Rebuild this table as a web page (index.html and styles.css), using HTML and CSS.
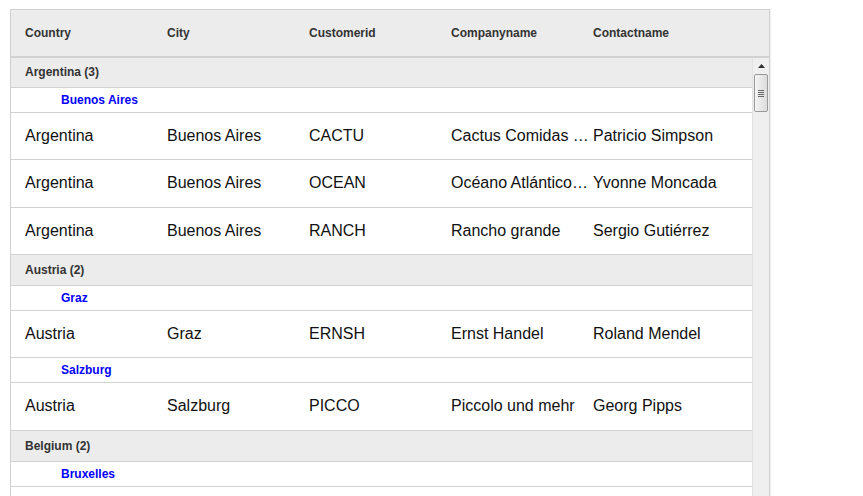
FILE: index.html
```html
<!DOCTYPE html>
<html>
<head>
<meta charset="utf-8">
<link rel="stylesheet" href="styles.css">
</head>
<body>
<div class="grid">
  <div class="header">
    <div class="cell">Country</div>
    <div class="cell">City</div>
    <div class="cell">Customerid</div>
    <div class="cell">Companyname</div>
    <div class="cell">Contactname</div>
  </div>
  <div class="body">
    <div class="rows">
      <div class="group first">Argentina (3)</div>
      <div class="sub">Buenos Aires</div>
      <div class="row"><div class="cell">Argentina</div><div class="cell">Buenos Aires</div><div class="cell">CACTU</div><div class="cell">Cactus Comidas para llevar</div><div class="cell">Patricio Simpson</div></div>
      <div class="row"><div class="cell">Argentina</div><div class="cell">Buenos Aires</div><div class="cell">OCEAN</div><div class="cell">Océano Atlántico Ltda.</div><div class="cell">Yvonne Moncada</div></div>
      <div class="row"><div class="cell">Argentina</div><div class="cell">Buenos Aires</div><div class="cell">RANCH</div><div class="cell">Rancho grande</div><div class="cell">Sergio Gutiérrez</div></div>
      <div class="group">Austria (2)</div>
      <div class="sub">Graz</div>
      <div class="row"><div class="cell">Austria</div><div class="cell">Graz</div><div class="cell">ERNSH</div><div class="cell">Ernst Handel</div><div class="cell">Roland Mendel</div></div>
      <div class="sub">Salzburg</div>
      <div class="row"><div class="cell">Austria</div><div class="cell">Salzburg</div><div class="cell">PICCO</div><div class="cell">Piccolo und mehr</div><div class="cell">Georg Pipps</div></div>
      <div class="group">Belgium (2)</div>
      <div class="sub">Bruxelles</div>
      <div class="row"><div class="cell">Belgium</div><div class="cell">Bruxelles</div><div class="cell">SUPRD</div><div class="cell">Suprêmes délices</div><div class="cell">Pascale Cartrain</div></div>
    </div>
    <div class="scrollbar">
      <div class="arrow"><svg width="7" height="4" viewBox="0 0 7 4"><path d="M0 4 L3.5 0 L7 4 Z" fill="#333"/></svg></div>
      <div class="thumb"><span></span><span></span><span></span><span></span></div>
    </div>
  </div>
</div>
</body>
</html>
```

FILE: styles.css
```css
html, body {
  margin: 0;
  padding: 0;
  background: #fff;
  overflow: hidden;
}
body {
  padding: 9px 0 0 10px;
  font-family: "Liberation Sans", Arial, sans-serif;
  color: #000;
}
.grid {
  width: 758px;
  border: 1px solid #d0d0d0;
  border-bottom: none;
  height: 600px;
  overflow: hidden;
  box-shadow: 1px 0 1px rgba(0,0,0,0.06);
}
.header {
  display: flex;
  align-items: center;
  height: 46px;
  padding-left: 14px;
  background: #ececec;
  border-bottom: 2px solid #d2d2d2;
  font-size: 12px;
  font-weight: bold;
  color: #333;
}
.cell {
  width: 142px;
  flex: none;
  box-sizing: border-box;
  padding-right: 3px;
  white-space: nowrap;
  overflow: hidden;
  text-overflow: ellipsis;
}
.body {
  display: flex;
}
.rows {
  flex: 1;
  min-width: 0;
}
.group {
  height: 30px;
  line-height: 30px;
  background: #ececec;
  border-bottom: 1px solid #d2d2d2;
  padding-left: 14px;
  font-size: 12px;
  font-weight: bold;
  color: #333;
}
.group.first {
  height: 29px;
  line-height: 29px;
}
.sub {
  height: 24px;
  line-height: 24px;
  border-bottom: 1px solid #d2d2d2;
  padding-left: 50px;
  font-size: 12px;
  font-weight: bold;
  color: #0000ff;
}
.row {
  display: flex;
  align-items: center;
  box-sizing: border-box;
  height: 47.33px;
  padding-left: 14px;
  border-bottom: 1px solid #d2d2d2;
  font-size: 16px;
  color: #111;
}
.scrollbar {
  width: 16px;
  flex: none;
  background: #efefef;
  border-left: 1px solid #e2e2e2;
  height: 540px;
}
.arrow {
  height: 16px;
  display: flex;
  align-items: center;
  justify-content: center;
}
.arrow svg {
  display: block;
}
.thumb {
  margin: 0 1px;
  height: 38px;
  box-sizing: border-box;
  border: 1px solid #9a9a9a;
  border-radius: 2px;
  background: linear-gradient(to right, #f4f4f4, #dcdcdc);
  display: flex;
  flex-direction: column;
  justify-content: center;
  align-items: center;
  gap: 1px;
}
.thumb span {
  display: block;
  width: 6px;
  height: 1px;
  background: #666;
}
```
